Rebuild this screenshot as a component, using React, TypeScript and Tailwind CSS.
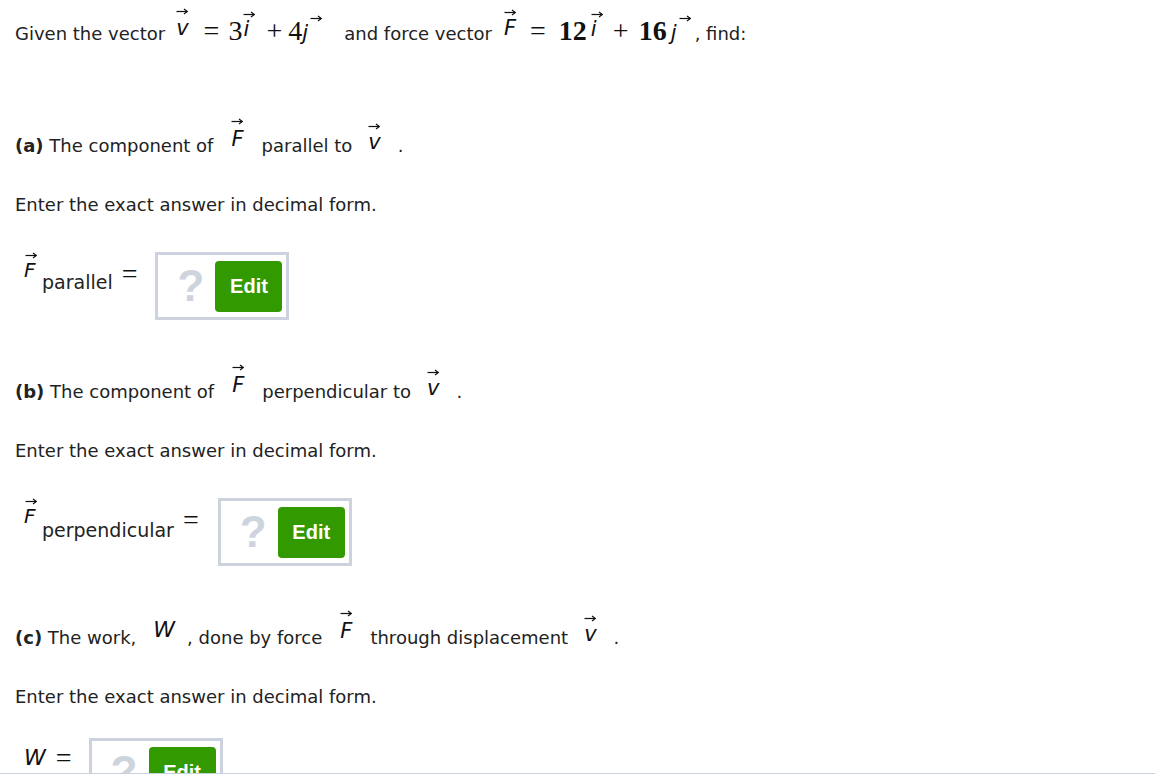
import React from "react";

const Arrow = ({ w = 12 }: { w?: number }) => (
  <svg width={w} height={7} viewBox={`0 0 ${w} 7`} className="block" fill="none">
    <path d={`M0.5 3.5H${w - 0.8}`} stroke="#111" strokeWidth="1.2" />
    <path d={`M${w - 4} 1L${w - 0.6} 3.5L${w - 4} 6`} stroke="#111" strokeWidth="1.2" />
  </svg>
);

const Vec = ({
  l,
  cls = "",
  arrowCls = "",
  raise = "align-[5px]",
  gap = "mt-[2px]",
}: {
  l: string;
  cls?: string;
  arrowCls?: string;
  raise?: string;
  gap?: string;
}) => (
  <span className={`inline-block ${raise} ${cls}`}>
    <span className={`block ${arrowCls}`}>
      <Arrow />
    </span>
    <span className={`block ${gap} font-['DejaVu_Sans',sans-serif] text-[21px] leading-[18px] text-[#111] italic`}>
      {l}
    </span>
  </span>
);

const Serif = ({ children, cls = "" }: { children: React.ReactNode; cls?: string }) => (
  <span className={`font-['Liberation_Serif',serif] text-[28px] text-[#111] ${cls}`}>{children}</span>
);

const AnswerBox = ({ cls = "" }: { cls?: string }) => (
  <div className={`flex h-[68px] w-[134px] shrink-0 items-center border-[3px] border-[#ccd3de] bg-white pl-[19px] pr-[4px] ${cls}`}>
    <span className="font-['Liberation_Sans',sans-serif] text-[44px] font-bold leading-none text-[#cdd4de]">?</span>
    <div className="ml-auto flex h-[51px] w-[67px] items-center justify-center rounded-[4px] bg-[#339900]">
      <span className="font-['Liberation_Sans',sans-serif] text-[20px] font-bold text-white">Edit</span>
    </div>
  </div>
);

const Enter = () => (
  <div className="flex h-[30px] items-center pl-[15px]">Enter the exact answer in decimal form.</div>
);

const Label = ({ sub, subTop = "mt-[22px]" }: { sub: string; subTop?: string }) => (
  <div className="flex items-start">
    <span className="inline-block">
      <span className="block pl-[1px]">
        <Arrow />
      </span>
      <span className="mt-[3px] block font-['DejaVu_Sans',sans-serif] text-[20px] leading-[16px] text-[#111] italic">F</span>
    </span>
    <span className={`${subTop} ml-[5px] text-[19px] leading-[20px]`}>{sub}</span>
    <span className="mt-[10px] ml-[9px] font-['Liberation_Serif',serif] text-[28px] leading-[24px] text-[#111]">=</span>
  </div>
);

export default function App() {
  return (
    <div className="flex h-[783px] w-[1155px] flex-col overflow-hidden bg-white font-['DejaVu_Sans',sans-serif] text-[18px] text-[#222]">
      <div className="flex-1 overflow-hidden">
        {/* Intro line */}
        <div className="mt-[10px] flex h-[42px] items-center pl-[15px] whitespace-nowrap">
          <div className="leading-[42px]">
            <span>Given the vector</span>
            <Vec l="v" cls="ml-[11px]" gap="mt-[4px]" />
            <Serif cls="ml-[15px]">=</Serif>
            <Serif cls="ml-[9px]">3</Serif>
            <Vec l="i" cls="ml-[1px]" raise="align-[4px]" />
            <Serif cls="ml-[11px]">+</Serif>
            <Serif cls="ml-[6px]">4</Serif>
            <Vec l="j" cls="ml-[0px]" raise="align-[0px]" arrowCls="pl-[8px]" />
            <span className="ml-[22px]">and force vector</span>
            <Vec l="F" cls="ml-[12px]" gap="mt-[3px]" />
            <Serif cls="ml-[14px]">=</Serif>
            <Serif cls="ml-[13px] font-bold">12</Serif>
            <Vec l="i" cls="ml-[4px]" raise="align-[4px]" />
            <Serif cls="ml-[10px]">+</Serif>
            <Serif cls="ml-[10px] font-bold">16</Serif>
            <Vec l="j" cls="ml-[4px]" raise="align-[0px]" arrowCls="pl-[8px]" />
            <span className="ml-[4px]">, find:</span>
          </div>
        </div>

        {/* (a) */}
        <div className="mt-[71px] flex h-[30px] items-center pl-[15px] whitespace-nowrap">
          <div>
            <span className="font-bold">(a)</span> The component of
            <Vec l="F" cls="ml-[18px]" raise="align-[6px]" gap="mt-[5px]" />
            <span className="ml-[18px]">parallel to</span>
            <Vec l="v" cls="ml-[16px]" raise="align-[3px]" gap="mt-[3px]" />
            <span className="ml-[17px]">.</span>
          </div>
        </div>
        <div className="mt-[36px]">
          <Enter />
        </div>
        <div className="mt-[33px] flex items-start pl-[24px]">
          <Label sub="parallel" subTop="mt-[20px]" />
          <AnswerBox cls="ml-[18px]" />
        </div>

        {/* (b) */}
        <div className="mt-[49px] flex h-[30px] items-center pl-[15px] whitespace-nowrap">
          <div>
            <span className="font-bold">(b)</span> The component of
            <Vec l="F" cls="ml-[18px]" raise="align-[6px]" gap="mt-[5px]" />
            <span className="ml-[18px]">perpendicular to</span>
            <Vec l="v" cls="ml-[16px]" raise="align-[3px]" gap="mt-[3px]" />
            <span className="ml-[17px]">.</span>
          </div>
        </div>
        <div className="mt-[36px]">
          <Enter />
        </div>
        <div className="mt-[33px] flex items-start pl-[24px]">
          <Label sub="perpendicular" />
          <AnswerBox cls="ml-[19px]" />
        </div>

        {/* (c) */}
        <div className="mt-[49px] flex h-[30px] items-center pl-[15px] whitespace-nowrap">
          <div>
            <span className="font-bold">(c)</span> The work,
            <span className="ml-[17px] inline-block align-[7px] font-['DejaVu_Sans',sans-serif] text-[22px] text-[#111] italic">W</span>
            <span className="ml-[12px]">, done by force</span>
            <Vec l="F" cls="ml-[18px]" raise="align-[6px]" gap="mt-[5px]" />
            <span className="ml-[18px]">through displacement</span>
            <Vec l="v" cls="ml-[16px]" raise="align-[3px]" gap="mt-[3px]" />
            <span className="ml-[17px]">.</span>
          </div>
        </div>
        <div className="mt-[36px]">
          <Enter />
        </div>
        <div className="mt-[27px] flex items-start pl-[24px]">
          <div className="flex items-start">
            <span className="mt-[8px] font-['DejaVu_Sans',sans-serif] text-[22px] leading-[24px] text-[#111] italic">W</span>
            <span className="mt-[8px] ml-[10px] font-['Liberation_Serif',serif] text-[28px] leading-[24px] text-[#111]">=</span>
          </div>
          <AnswerBox cls="ml-[17px]" />
        </div>
      </div>
      <div className="h-[10px] shrink-0 border-t border-[#c8d0dc] bg-white" />
    </div>
  );
}
